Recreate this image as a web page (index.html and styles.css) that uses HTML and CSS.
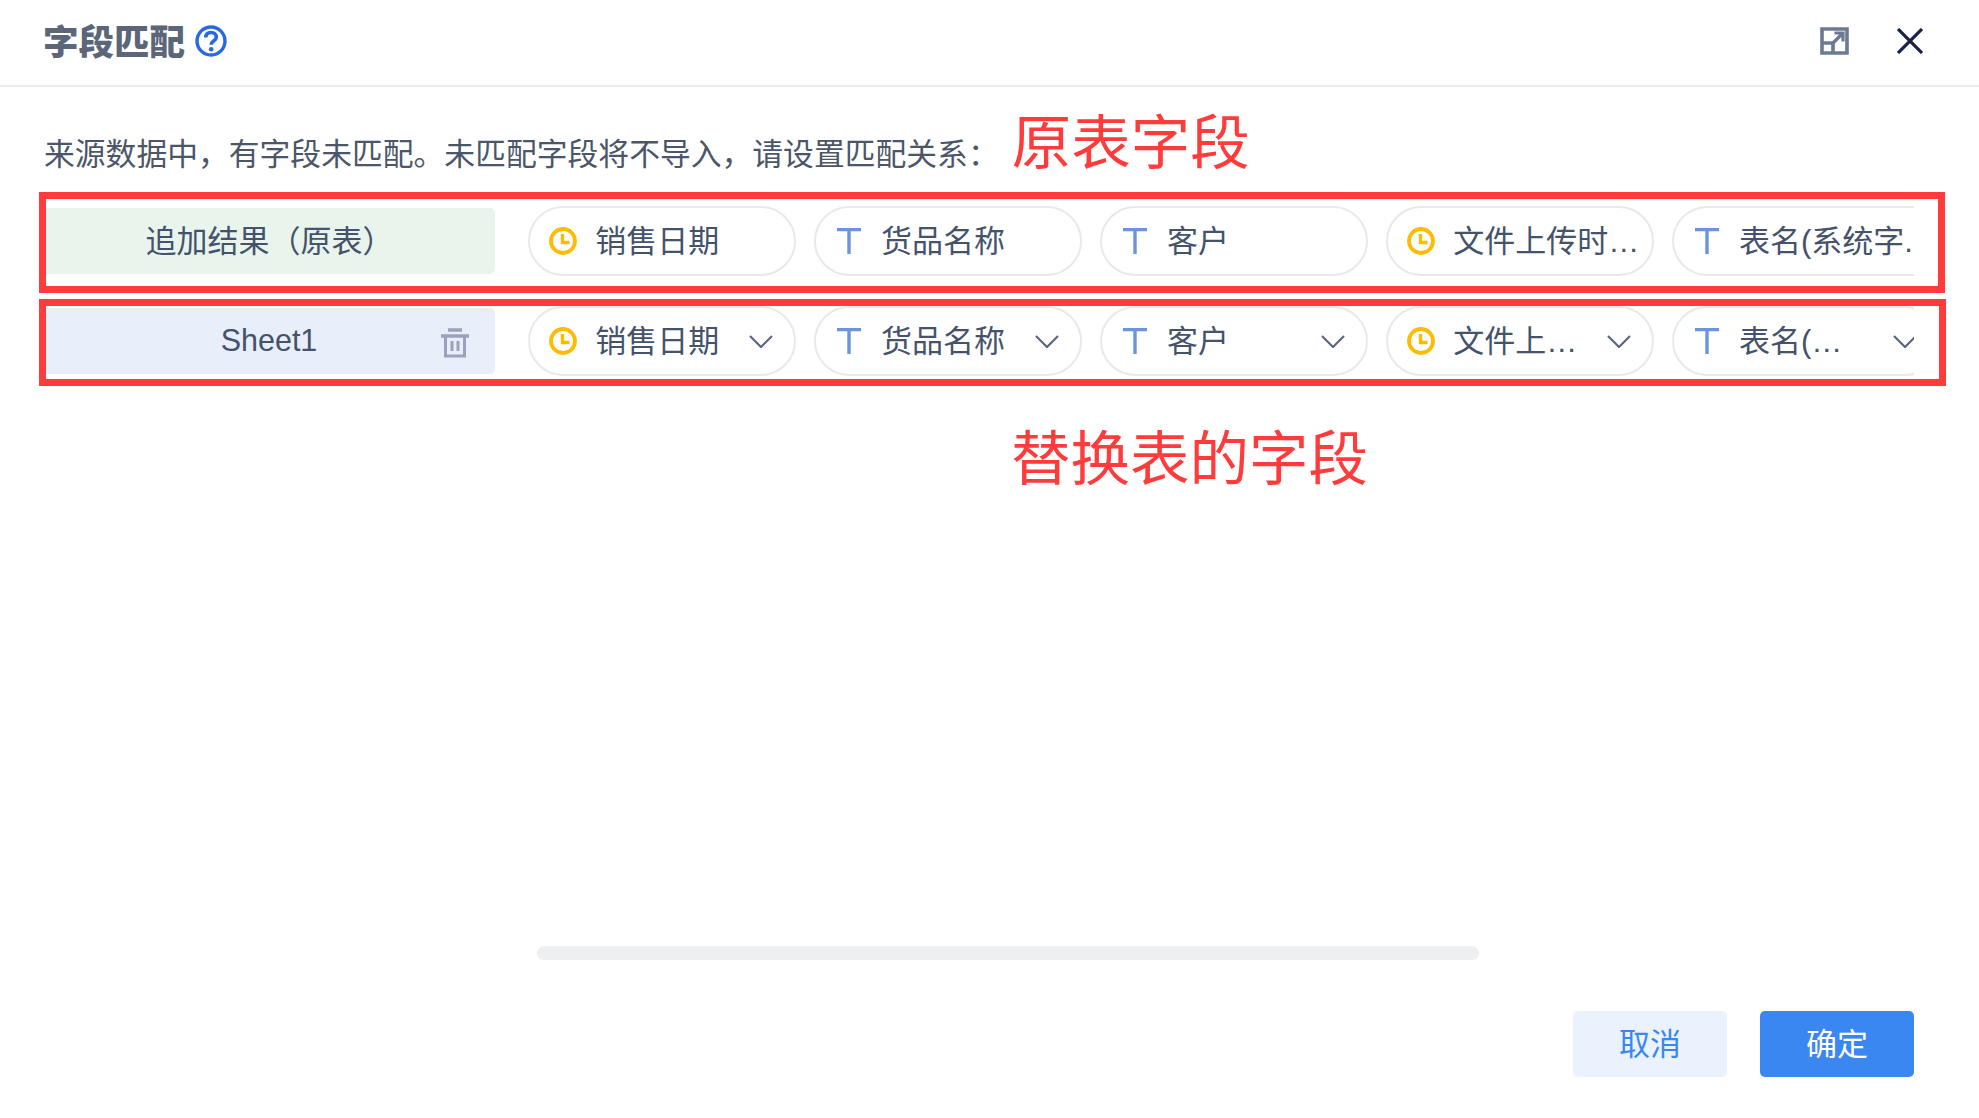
FILE: index.html
```html
<!DOCTYPE html>
<html lang="zh-CN">
<head>
<meta charset="utf-8">
<title>字段匹配</title>
<link rel="stylesheet" href="styles.css">
</head>
<body>
<svg class="defs" width="0" height="0" aria-hidden="true">
  <symbol id="clock" viewBox="0 0 28 28">
    <circle cx="14" cy="14" r="12" fill="none" stroke="currentColor" stroke-width="3.8"/>
    <path d="M13.500 7V15.500H20.500" fill="none" stroke="currentColor" stroke-width="3.400"/>
  </symbol>
  <symbol id="text" viewBox="0 0 24 26">
    <path d="M0 1.500H24M12 1.500V26" fill="none" stroke="currentColor" stroke-width="3.400"/>
  </symbol>
  <symbol id="chev" viewBox="0 0 24 13">
    <path d="M1 1L12 12L23 1" fill="none" stroke="currentColor" stroke-width="2.200"/>
  </symbol>
</svg>
<div class="dialog">
  <header class="head">
    <h1 class="title">字段匹配</h1>
    <svg class="help" viewBox="0 0 32 32"><circle cx="16" cy="16" r="14" fill="none" stroke="currentColor" stroke-width="3.400"/><path d="M10.800 12.500C10.800 9.200 13 7.500 16 7.500C19.200 7.500 21.300 9.500 21.300 12.200C21.300 15.800 16.200 15.800 16.200 19.800" fill="none" stroke="currentColor" stroke-width="3.600"/><circle cx="16.200" cy="24.200" r="2.300" fill="currentColor"/></svg>
    <div class="head-actions">
      <svg class="expand" viewBox="0 0 29 28"><path d="M2 2H27V26H2ZM2 16H13V26" fill="none" stroke="currentColor" stroke-width="3.600"/><path d="M13 16L22.500 6.500M14.500 6H23V14.500" fill="none" stroke="currentColor" stroke-width="3.200"/></svg>
      <svg class="close" viewBox="0 0 26 26"><path d="M1 1L25 25M25 1L1 25" fill="none" stroke="currentColor" stroke-width="3.200"/></svg>
    </div>
  </header>

  <div class="intro">
    <p class="intro-text">来源数据中，有字段未匹配。未匹配字段将不导入，请设置匹配关系：</p>
    <span class="note">原表字段</span>
  </div>

  <section class="match match-first">
    <div class="cell cell-green">追加结果（原表）</div>
    <div class="fields">
      <div class="pill"><svg class="ic-clock"><use href="#clock"/></svg><span class="pill-text">销售日期</span></div>
      <div class="pill"><svg class="ic-text"><use href="#text"/></svg><span class="pill-text">货品名称</span></div>
      <div class="pill"><svg class="ic-text"><use href="#text"/></svg><span class="pill-text">客户</span></div>
      <div class="pill"><svg class="ic-clock"><use href="#clock"/></svg><span class="pill-text">文件上传时…</span></div>
      <div class="pill pill-clipped"><svg class="ic-text"><use href="#text"/></svg><span class="pill-text">表名(系统字.</span></div>
    </div>
  </section>

  <section class="match match-second">
    <div class="cell cell-blue">
      <span class="sheet-name">Sheet1</span>
      <svg class="trash" viewBox="0 0 28 30"><path d="M7 2H21M0 8H28" fill="none" stroke="currentColor" stroke-width="3.400"/><path d="M4.500 8V28H23.500V8M11 13V23M17 13V23" fill="none" stroke="currentColor" stroke-width="3"/></svg>
    </div>
    <div class="fields">
      <div class="pill"><svg class="ic-clock"><use href="#clock"/></svg><span class="pill-text">销售日期</span><svg class="ic-chev"><use href="#chev"/></svg></div>
      <div class="pill"><svg class="ic-text"><use href="#text"/></svg><span class="pill-text">货品名称</span><svg class="ic-chev"><use href="#chev"/></svg></div>
      <div class="pill"><svg class="ic-text"><use href="#text"/></svg><span class="pill-text">客户</span><svg class="ic-chev"><use href="#chev"/></svg></div>
      <div class="pill"><svg class="ic-clock"><use href="#clock"/></svg><span class="pill-text">文件上…</span><svg class="ic-chev"><use href="#chev"/></svg></div>
      <div class="pill"><svg class="ic-text"><use href="#text"/></svg><span class="pill-text">表名(…</span><svg class="ic-chev"><use href="#chev"/></svg></div>
    </div>
  </section>

  <div class="note note-second">替换表的字段</div>
  <div class="scrollbar"></div>

  <footer class="foot">
    <button class="btn btn-cancel" type="button">取消</button>
    <button class="btn btn-ok" type="button">确定</button>
  </footer>
</div>
</body>
</html>
```
FILE: styles.css
```css
* { box-sizing: border-box; }
html, body { margin: 0; padding: 0; background: #fff; }
body {
  width: 1979px;
  height: 1118px;
  overflow: hidden;
  font-family: "Liberation Sans", "Noto Sans CJK SC", sans-serif;
  color: #44526c;
}
.defs { position: absolute; }
.dialog { display: flex; flex-direction: column; height: 100%; }

.head {
  display: flex;
  align-items: center;
  height: 87px;
  padding: 0 56px 3px 43px;
  border-bottom: 2px solid #ebebf0;
}
.title { margin: 3px 0 0; font-size: 35.500px; line-height: 40px; font-weight: 900; color: #5b6679; }
.help { width: 32px; height: 32px; margin-left: 10px; color: #2a68e0; }
.head-actions { display: flex; align-items: center; gap: 48px; margin-left: auto; }
.expand { width: 29px; height: 28px; color: #6c7a91; }
.close { width: 26px; height: 26px; color: #1b2045; }

.intro {
  display: flex;
  align-items: flex-start;
  height: 105px;
  padding: 24px 0 0 44px;
}
.intro-text { margin: 0; padding-top: 26px; font-size: 30.800px; line-height: 36px; color: #4b5668; }
.note { font-size: 59.500px; line-height: 70px; color: #ff3b3b; }
.intro .note { margin-left: 13px; margin-top: -2px; }

.match { display: flex; margin-left: 39px; border: 7px solid #ff3b3b; }
.match-first { width: 1906px; height: 101px; padding-top: 7px; }
.match-second { width: 1907px; height: 87px; margin-top: 6px; }

.cell {
  position: relative;
  display: flex;
  align-items: center;
  justify-content: center;
  flex: 0 0 449px;
  height: 66px;
  margin-top: 2px;
  padding: 0 2px 5px 0;
  border-radius: 0 5px 5px 0;
  font-size: 31px;
}
.cell-green { background: #e9f5ec; }
.cell-blue { background: #e8eefa; padding: 0 0 2px; font-size: 30.500px; }
.sheet-name { margin-right: 3px; }
.trash { position: absolute; left: 395px; top: 20px; width: 28px; height: 30px; color: #9ba0bd; }

.fields { display: flex; gap: 18px; width: 1386px; height: 70px; margin-left: 33px; overflow: hidden; }
.pill {
  display: flex;
  align-items: center;
  flex: 0 0 268px;
  min-width: 0;
  height: 70px;
  padding: 0 21.500px 0 18.500px;
  border: 2.500px solid #e8e8ef;
  border-radius: 35px;
  background: #fff;
}
.pill-clipped { flex-basis: 242px; padding-right: 0; border-right: 0; border-radius: 35px 0 0 35px; }
.ic-clock { flex: none; width: 28px; height: 28px; margin-right: 18.700px; color: #fdbc00; }
.ic-text { flex: none; width: 24px; height: 26px; margin: 0 20.500px 0 2px; color: #6d93dc; }
.pill-text { flex: 1; min-width: 0; padding-top: 2px; font-size: 31px; line-height: 36px; white-space: nowrap; }
.ic-chev { flex: none; width: 24px; height: 13px; color: #5d6781; }

.note-second { margin: 39px 0 0 1011px; height: 70px; }
.scrollbar { width: 942px; height: 14px; margin: 451px 0 0 537px; border-radius: 7px; background: #eeeff1; }

.foot { display: flex; justify-content: flex-end; gap: 33px; margin-top: 51px; padding-right: 65px; }
.btn {
  width: 154px;
  height: 66px;
  padding: 0 0 5px;
  border: 0;
  border-radius: 5px;
  font-family: inherit;
  font-size: 31px;
}
.btn-cancel { background: #eaf2fd; color: #3b87f2; }
.btn-ok { background: #3a87f2; color: #fff; }
```
